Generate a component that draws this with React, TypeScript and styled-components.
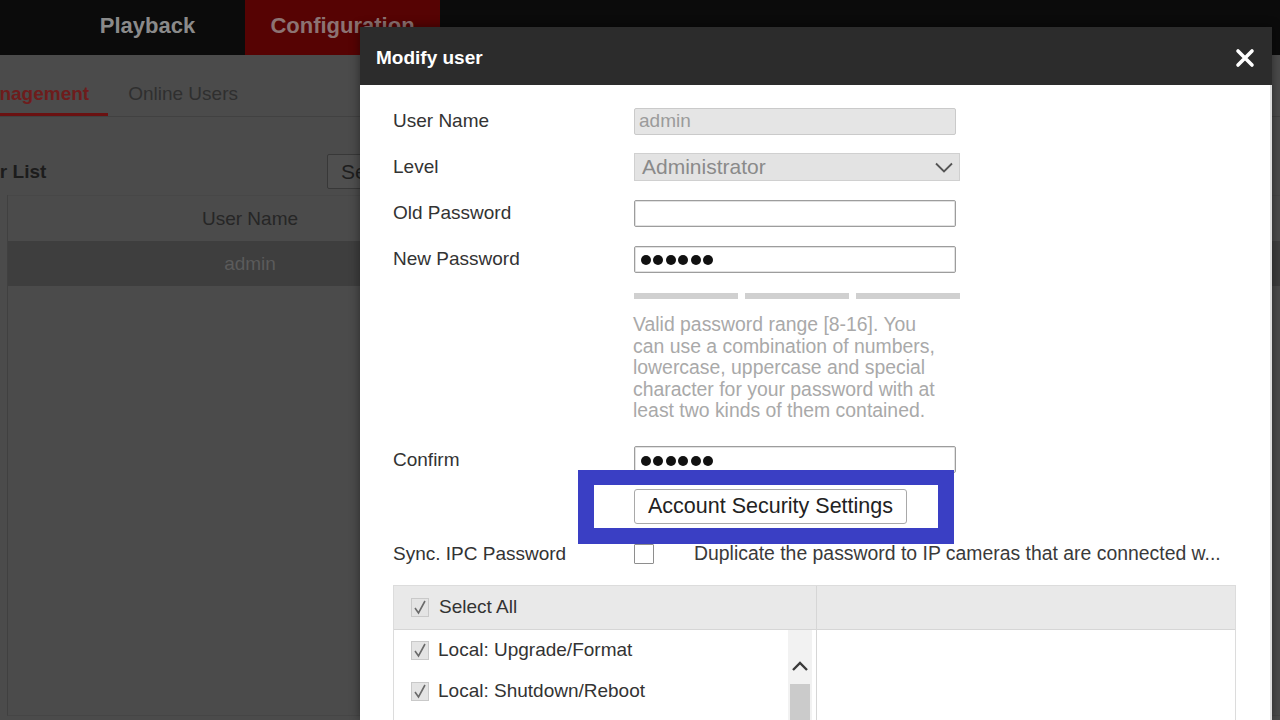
import React from 'react';
import styled, { createGlobalStyle } from 'styled-components';

// Global
const GlobalStyle = createGlobalStyle`
	html, body, #root {
		margin: 0;
		height: 100%;
	}
	body {
		overflow: hidden;
		background: #4b4b4b;
		font-family: "Liberation Sans", Arial, sans-serif;
	}
	* {
		box-sizing: border-box;
	}
`;

// Data
const permissions = ['Local: Upgrade/Format', 'Local: Shutdown/Reboot', 'Local: Log Search'];

const helpText =
	'Valid password range [8-16]. You can use a combination of numbers, lowercase, uppercase and special character for your password with at least two kinds of them contained.';

/**
 * Small icons
 */
const CloseIcon: React.FC = () => (
	<svg width="20" height="20" viewBox="0 0 20 20">
		<path d="M3 3 L17 17 M17 3 L3 17" stroke="#fff" strokeWidth="3.6" strokeLinecap="round" />
	</svg>
);

const Chevron: React.FC<{ up?: boolean }> = ({ up }) => (
	<svg width="18" height="11" viewBox="0 0 18 11">
		<polyline
			points={ up ? '2,9 9,2 16,9' : '1,1.5 9,9.5 17,1.5' }
			fill="none"
			stroke={ up ? '#3a3a3a' : '#555' }
			strokeWidth={ up ? 2.4 : 1.8 }
		/>
	</svg>
);

const CheckedBox: React.FC = () => (
	<svg width="18" height="19" viewBox="0 0 18 19">
		<rect x="0.5" y="0.5" width="17" height="18" fill="#e4e4e4" stroke="#c9c9c9" />
		<path d="M4 10 L7.5 15 L14 3" fill="none" stroke="#6a6a6a" strokeWidth="1.6" />
	</svg>
);

const PasswordDots: React.FC = () => (
	<Dots>
		{ [0, 1, 2, 3, 4, 5].map((i) => <Dot key={ i } />) }
	</Dots>
);

/**
 * Modify user screen
 */
const App: React.FC = () => (
	<Page>
		<GlobalStyle />
		<TopNav>
			<NavTab>Playback</NavTab>
			<NavTab $active>Configuration</NavTab>
		</TopNav>

		<TabBar>
			<SubTab $active>Management</SubTab>
			<SubTab>Online Users</SubTab>
		</TabBar>

		<ListHeader>
			<ListTitle>User List</ListTitle>
			<DimButton>Search</DimButton>
		</ListHeader>

		<UserTable>
			<UserHead>
				<UserCell>User Name</UserCell>
			</UserHead>
			<UserRow>
				<UserCell>admin</UserCell>
			</UserRow>
		</UserTable>

		<Modal>
			<ModalHeader>
				<span>Modify user</span>
				<CloseIcon />
			</ModalHeader>

			<ModalBody>
				<FormRow>
					<Label>User Name</Label>
					<Field $disabled>admin</Field>
				</FormRow>
				<FormRow>
					<Label>Level</Label>
					<SelectBox>
						<span>Administrator</span>
						<Chevron />
					</SelectBox>
				</FormRow>
				<FormRow>
					<Label>Old Password</Label>
					<Field />
				</FormRow>
				<FormRow>
					<Label>New Password</Label>
					<Field>
						<PasswordDots />
					</Field>
				</FormRow>

				<StrengthBars>
					<Bar />
					<Bar />
					<Bar />
				</StrengthBars>
				<HelpText>{ helpText }</HelpText>

				<FormRow $top={ 15 }>
					<Label>Confirm</Label>
					<Field>
						<PasswordDots />
					</Field>
				</FormRow>

				<ButtonRow>
					<ButtonWrap>
						<PlainButton>Account Security Settings</PlainButton>
						<Highlight />
					</ButtonWrap>
				</ButtonRow>

				<SyncRow>
					<Label>Sync. IPC Password</Label>
					<SyncControl>
						<EmptyBox />
						<SyncText>Duplicate the password to IP cameras that are connected w...</SyncText>
					</SyncControl>
				</SyncRow>

				<PermTable>
					<PermHead>
						<CheckedBox />
						<span>Select All</span>
					</PermHead>
					<PermHead $side />
					<PermList>
						<div>
							{ permissions.map((p) => (
								<PermItem key={ p }>
									<CheckedBox />
									<span>{ p }</span>
								</PermItem>
							)) }
						</div>
						<ScrollTrack>
							<ScrollArrow>
								<Chevron up />
							</ScrollArrow>
							<ScrollThumb />
						</ScrollTrack>
					</PermList>
					<PermSide />
				</PermTable>
			</ModalBody>
		</Modal>
	</Page>
);
App.displayName = 'App';
export default App;

// Styles: background page
const Page = styled.div`
	position: relative;
	width: 1280px;
	height: 720px;
	overflow: hidden;
	display: flex;
	flex-direction: column;
	background: #4b4b4b;
`;

const TopNav = styled.div`
	height: 55px;
	flex: 0 0 auto;
	display: flex;
	padding-left: 50px;
	background: #0b0b0b;
`;

const NavTab = styled.div<{ $active?: boolean }>`
	width: 195px;
	display: flex;
	align-items: center;
	justify-content: center;
	padding-bottom: 4px;
	font-size: 22px;
	font-weight: bold;
	color: ${ (p) => (p.$active ? '#8c7373' : '#8a8a8a') };
	background: ${ (p) => (p.$active ? '#560303' : 'transparent') };
`;

const TabBar = styled.div`
	height: 62px;
	flex: 0 0 auto;
	display: flex;
	align-items: flex-end;
	gap: 1px;
	border-bottom: 1px solid #414141;
`;

const SubTab = styled.div<{ $active?: boolean }>`
	font-size: 19px;
	line-height: 22px;
	padding: 0 19px 8px;
	font-weight: ${ (p) => (p.$active ? 'bold' : 'normal') };
	color: ${ (p) => (p.$active ? '#6e1c1c' : '#2f2f2f') };
	border-bottom: 3px solid ${ (p) => (p.$active ? '#6a1111' : 'transparent') };
	&:first-child {
		margin-left: -46px;
	}
`;

const ListHeader = styled.div`
	margin-top: 37px;
	height: 35px;
	display: flex;
	align-items: center;
`;

const ListTitle = styled.div`
	flex: 0 0 362px;
	margin-left: -35px;
	font-size: 19px;
	font-weight: bold;
	color: #1c1c1c;
`;

const DimButton = styled.div`
	height: 35px;
	padding: 0 13px;
	display: flex;
	align-items: center;
	font-size: 21px;
	color: #1e1e1e;
	background: #4f4f4f;
	border: 1px solid #383838;
	border-radius: 2px;
`;

const UserTable = styled.div`
	flex: 1;
	margin: 6px 0 4px 7px;
	border-left: 1px solid #404040;
	border-bottom: 1px solid #454545;
`;

const UserHead = styled.div`
	height: 46px;
	display: flex;
	align-items: center;
	color: #262626;
	border-top: 1px solid #474747;
`;

const UserRow = styled.div`
	height: 45px;
	display: flex;
	align-items: center;
	color: #5b5b5b;
	background: #3e3e3e;
`;

const UserCell = styled.div`
	width: 484px;
	text-align: center;
	font-size: 19px;
`;

// Styles: modal
const Modal = styled.div`
	position: absolute;
	left: 360px;
	top: 27px;
	width: 912px;
	bottom: 0;
	display: flex;
	flex-direction: column;
	box-shadow: 0 0 10px rgba(0, 0, 0, 0.45);
`;

const ModalHeader = styled.div`
	height: 58px;
	flex: 0 0 auto;
	display: flex;
	align-items: center;
	justify-content: space-between;
	padding: 3px 17px 0 16px;
	background: #2c2c2c;
	color: #fff;
	font-size: 19px;
	font-weight: bold;
`;

const ModalBody = styled.div`
	flex: 1;
	padding: 13px 34px 0 33px;
	background: #fff;
	border-right: 2px solid #dedede;
	overflow: hidden;
`;

const FormRow = styled.div<{ $top?: number }>`
	height: 46px;
	margin-top: ${ (p) => p.$top || 0 }px;
	display: grid;
	grid-template-columns: 241px auto;
	align-items: center;
	justify-content: start;
`;

const Label = styled.div`
	font-size: 19px;
	color: #333;
`;

const Field = styled.div<{ $disabled?: boolean }>`
	width: 322px;
	height: 27px;
	display: flex;
	align-items: center;
	padding-left: ${ (p) => (p.$disabled ? 4 : 6) }px;
	font-size: 19px;
	color: #9b9b9b;
	background: ${ (p) => (p.$disabled ? '#e5e5e5' : '#fff') };
	border: 1px solid ${ (p) => (p.$disabled ? '#cacaca' : '#9d9d9d') };
	border-radius: 2px;
	box-shadow: ${ (p) => (p.$disabled ? 'none' : 'inset 0 0 0 1px #e2e2e2') };
`;

const SelectBox = styled.div`
	width: 326px;
	height: 28px;
	display: flex;
	align-items: center;
	justify-content: space-between;
	padding: 0 6px 0 7px;
	font-size: 21px;
	color: #8a8a8a;
	background: #e3e3e3;
	border: 1px solid #d0d0d0;
`;

const Dots = styled.div`
	display: flex;
	gap: 2.4px;
	margin-top: 2px;
`;

const Dot = styled.span`
	width: 10px;
	height: 10px;
	border-radius: 50%;
	background: #111;
`;

const StrengthBars = styled.div`
	width: 326px;
	height: 6px;
	margin: 11px 0 0 241px;
	display: grid;
	grid-template-columns: repeat(3, 1fr);
	gap: 7px;
`;

const Bar = styled.div`
	background: #d0d0d0;
`;

const HelpText = styled.div`
	width: 310px;
	margin: 15px 0 0 240px;
	font-size: 19.4px;
	line-height: 21.5px;
	color: #a9a9a9;
`;

const ButtonRow = styled.div`
	margin-top: 6px;
	padding-left: 241px;
`;

const ButtonWrap = styled.div`
	position: relative;
	display: inline-block;
`;

const PlainButton = styled.div`
	width: 273px;
	height: 35px;
	display: flex;
	align-items: center;
	justify-content: center;
	font-size: 21.5px;
	color: #222;
	background: #fff;
	border: 1px solid #a9a9a9;
	border-radius: 3px;
`;

// Annotation frame drawn over the form
const Highlight = styled.div`
	position: absolute;
	left: -56px;
	top: -19px;
	width: 376px;
	height: 74px;
	border: 16px solid #3a3fc4;
	border-top-width: 15px;
	pointer-events: none;
`;

const SyncRow = styled(FormRow)`
	height: 30px;
	margin-top: 15px;
`;

const SyncControl = styled.div`
	display: flex;
	align-items: center;
	gap: 40px;
`;

const EmptyBox = styled.div`
	width: 20px;
	height: 20px;
	border: 1px solid #8e8e8e;
	border-radius: 1px;
	background: #fff;
`;

const SyncText = styled.div`
	font-size: 19.4px;
	color: #3a3a3a;
	white-space: nowrap;
`;

const PermTable = styled.div`
	width: 843px;
	margin-top: 16px;
	display: grid;
	grid-template-columns: 422px 1fr;
	border: 1px solid #dcdcdc;
	border-bottom: none;
`;

const PermHead = styled.div<{ $side?: boolean }>`
	height: 44px;
	display: flex;
	align-items: center;
	gap: 10px;
	padding-left: 17px;
	font-size: 19px;
	color: #333;
	background: #e9e9e9;
	border-bottom: 1px solid #d6d6d6;
	border-left: ${ (p) => (p.$side ? '1px solid #d6d6d6' : 'none') };
`;

const PermList = styled.div`
	height: 120px;
	display: grid;
	grid-template-columns: 1fr 28px;
`;

const PermItem = styled.div`
	height: 41px;
	display: flex;
	align-items: center;
	gap: 9px;
	padding-left: 17px;
	font-size: 19px;
	color: #333;
`;

const PermSide = styled.div`
	border-left: 1px solid #d6d6d6;
	background: #fff;
`;

const ScrollTrack = styled.div`
	display: flex;
	flex-direction: column;
	margin-right: 4px;
	background: #f2f2f2;
`;

const ScrollArrow = styled.div`
	height: 54px;
	display: flex;
	align-items: flex-end;
	justify-content: center;
	padding-bottom: 12px;
`;

const ScrollThumb = styled.div`
	flex: 1;
	margin: 0 2px;
	background: #cbcbcb;
`;
